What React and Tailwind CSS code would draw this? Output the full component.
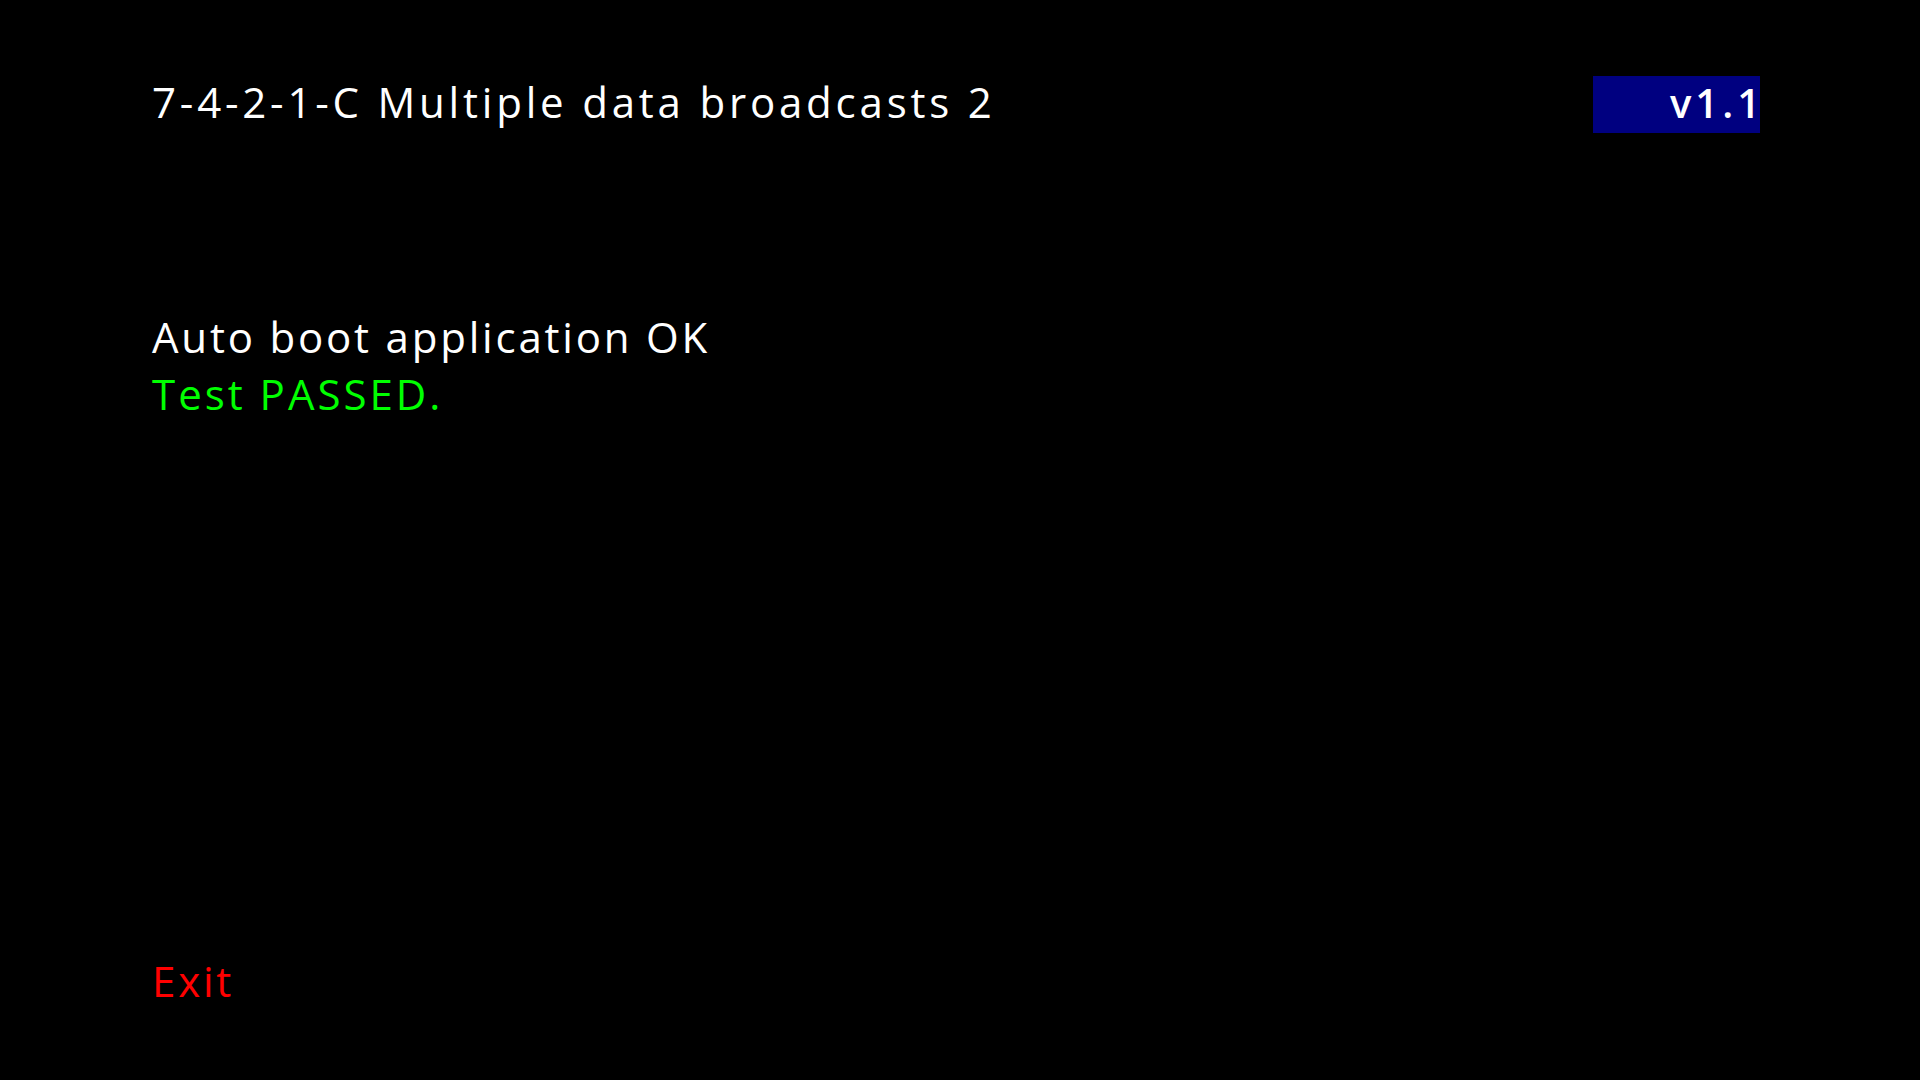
export default function App() {
  return (
    <div className="w-[1920px] h-[1080px] bg-black text-white overflow-hidden" style={{ fontFamily: '"Open Sans", "DejaVu Sans", sans-serif' }}>
      <div className="flex flex-col h-full pl-[152px] pr-[160px] pt-[73px]">
        <div className="flex items-start justify-between">
          <div className="text-[42px] leading-[57px] tracking-[3.8px] text-white whitespace-nowrap">7-4-2-1-C Multiple data broadcasts 2</div>
          <div className="mt-[3px] w-[167px] h-[57px] bg-[#000080] flex items-center justify-end overflow-hidden pb-[4px]">
            <span className="text-[40px] font-semibold text-white whitespace-nowrap">
              <span className="tracking-[4px]">v1.</span>
              <span>1</span>
            </span>
          </div>
        </div>
        <div className="mt-[175px] flex flex-col">
          <div className="text-[42px] leading-[57px] tracking-[2.8px] text-white whitespace-nowrap">Auto boot application OK</div>
          <div className="text-[42px] leading-[57px] tracking-[3px] text-[#00ff00] whitespace-nowrap">Test PASSED.</div>
        </div>
        <div className="mt-[530px] text-[42px] leading-[57px] tracking-[2.8px] text-[#ff0000] whitespace-nowrap">Exit</div>
      </div>
    </div>
  );
}
